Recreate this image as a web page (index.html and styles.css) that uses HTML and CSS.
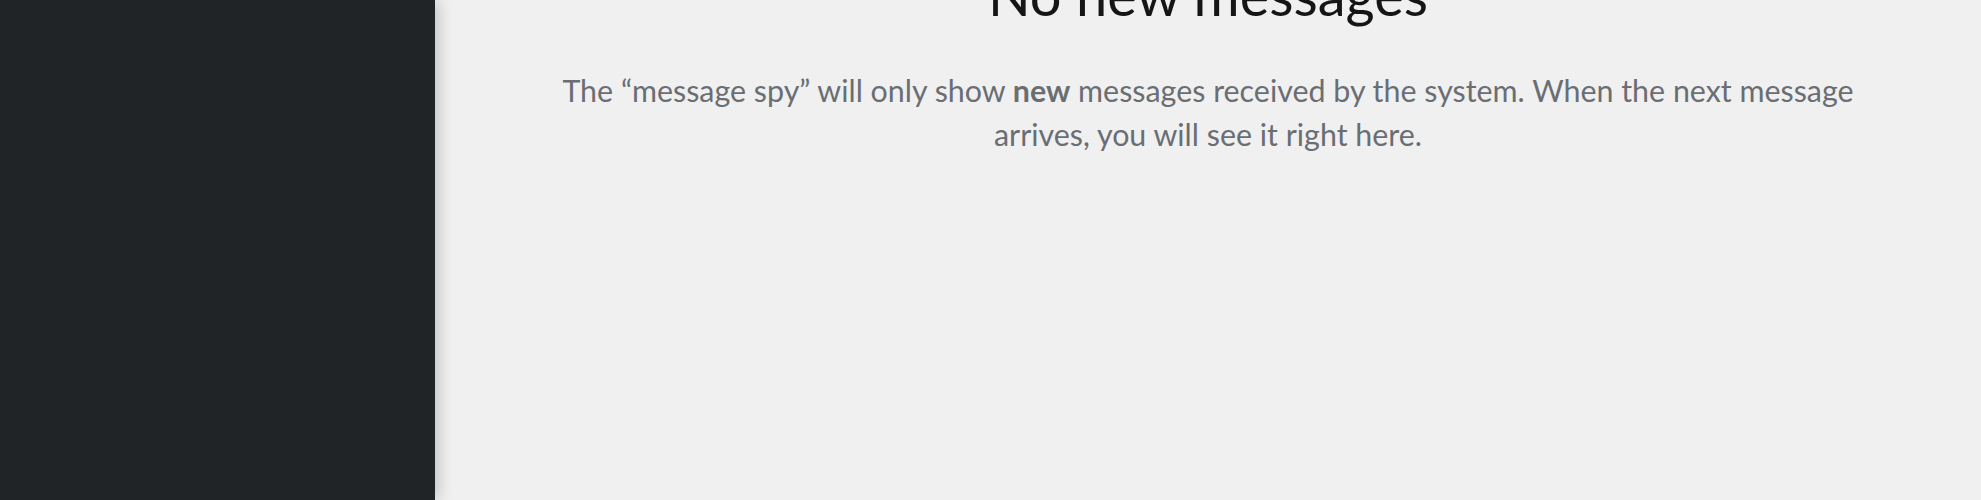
FILE: index.html
```html
<!DOCTYPE html>
<html lang="en">
<head>
<meta charset="utf-8">
<title>Message spy</title>
<link rel="stylesheet" href="styles.css">
</head>
<body>
<div class="app">
  <aside class="sidebar"></aside>
  <main class="main">
    <section class="empty">
      <h1 class="empty-title">No new messages</h1>
      <p class="empty-body">The “message spy” will only show <strong>new</strong> messages received by the system. When the next message arrives, you will see it right here.</p>
    </section>
  </main>
</div>
</body>
</html>
```
FILE: styles.css
```css
* { box-sizing: border-box; }
html, body { margin: 0; padding: 0; }
body {
  font-family: Lato, "Liberation Sans", sans-serif;
  background: #f0f0f0;
  height: 500px;
  overflow: hidden;
}
.app {
  display: flex;
  height: 500px;
}
.sidebar {
  flex: 0 0 435px;
  background: #212427;
  box-shadow: 4px 0 14px rgba(0, 0, 0, 0.18);
  position: relative;
  z-index: 1;
}
.main {
  flex: 1;
  background: #f0f0f0;
  display: flex;
  justify-content: center;
}
.empty {
  display: flex;
  flex-direction: column;
  align-items: center;
  text-align: center;
  margin-top: -37px;
  max-width: 1330px;
}
.empty-title {
  margin: 0;
  font-size: 56px;
  line-height: 64px;
  font-weight: 400;
  color: #151515;
}
.empty-body {
  margin: 41px 0 0;
  font-size: 30.4px;
  line-height: 44px;
  color: #6a6e73;
}
.empty-body strong {
  font-weight: 700;
  color: #6a6e73;
}
```
